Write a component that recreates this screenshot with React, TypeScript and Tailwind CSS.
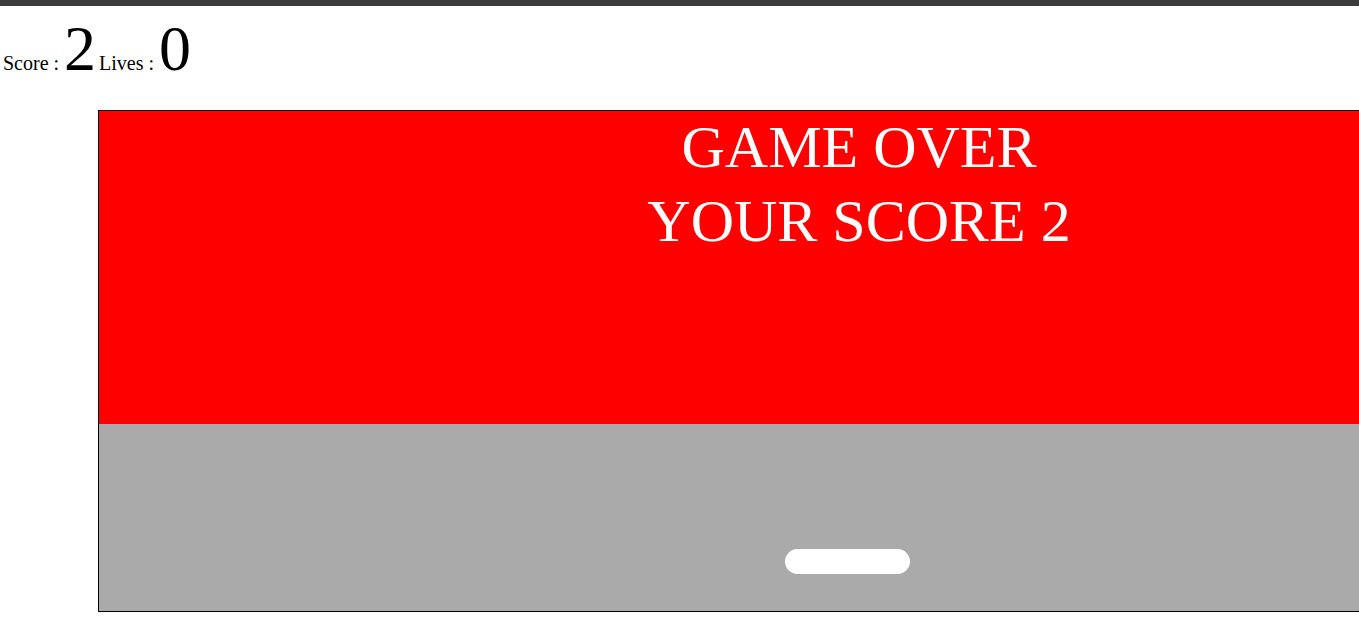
import React from "react";

export default function App() {
  const score = 2;
  const lives = 0;

  return (
    <div
      className="h-screen w-screen overflow-hidden bg-white text-black"
      style={{ fontFamily: '"Liberation Serif", "Times New Roman", serif' }}
    >
      <div className="h-[6px] bg-[#3c3c3c]" />

      {/* score bar */}
      <div className="flex items-baseline pl-[3px] pt-[11px] h-[104px] leading-none">
        <span className="text-[20px]">Score :&nbsp;</span>
        <span className="text-[64px]">{score}</span>
        <span className="ml-[3px] text-[20px]">Lives :&nbsp;</span>
        <span className="text-[64px]">{lives}</span>
      </div>

      {/* board */}
      <div className="ml-[98px] w-[1522px] border border-black">
        <div className="h-[313px] bg-[#ff0000] text-white text-center text-[60px] leading-[73.5px]">
          <p>GAME OVER</p>
          <p>YOUR SCORE {score}</p>
        </div>
        <div className="relative h-[187px] bg-[#aaaaaa]">
          <div className="absolute left-[686px] top-[125px] h-[25px] w-[125px] rounded-full bg-white" />
        </div>
      </div>
    </div>
  );
}
